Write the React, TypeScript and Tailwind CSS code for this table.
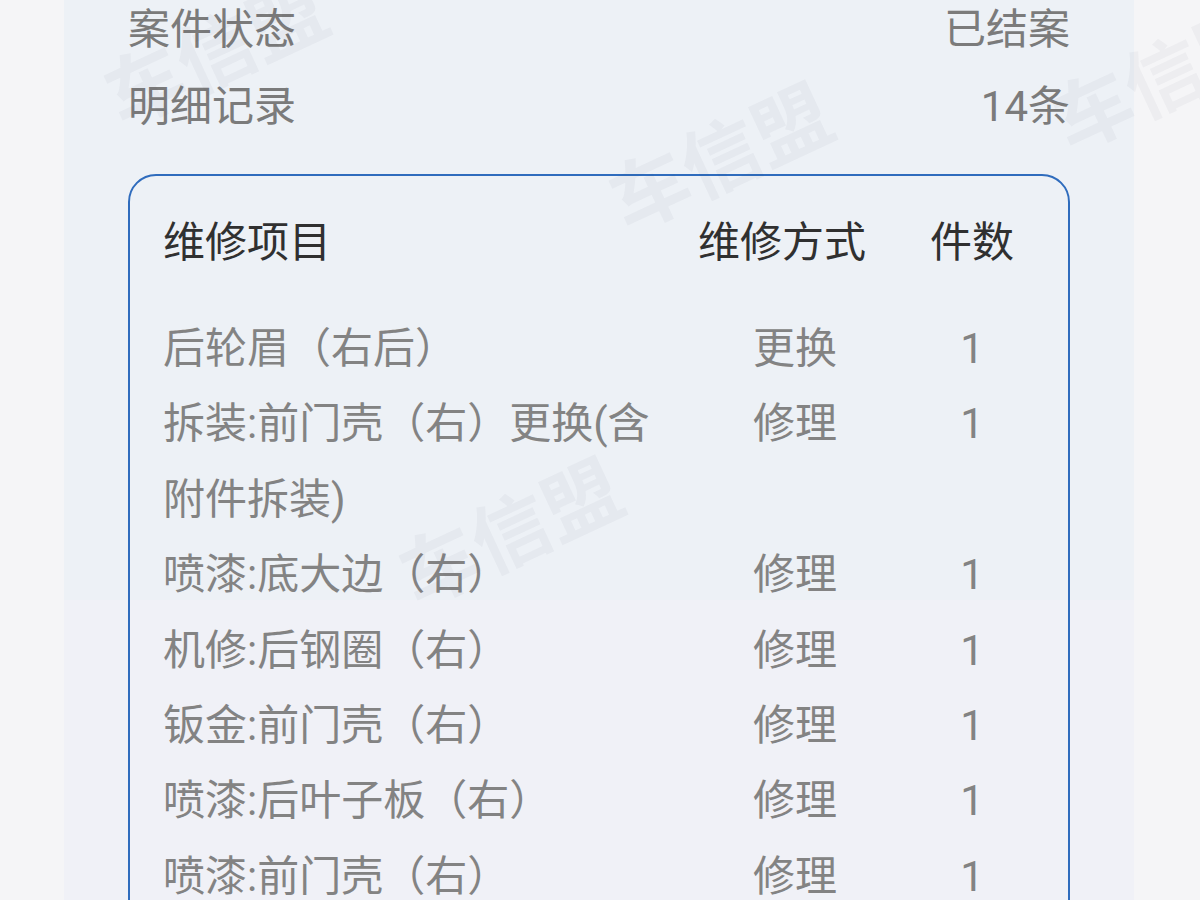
import React from "react";

const font = { fontFamily: 'Roboto, "Noto Sans CJK SC", "Noto Sans", sans-serif' };

const rows: { name: string; method: string; count: string }[] = [
  { name: "后轮眉（右后）", method: "更换", count: "1" },
  { name: "拆装:前门壳（右）更换(含附件拆装)", method: "修理", count: "1" },
  { name: "喷漆:底大边（右）", method: "修理", count: "1" },
  { name: "机修:后钢圈（右）", method: "修理", count: "1" },
  { name: "钣金:前门壳（右）", method: "修理", count: "1" },
  { name: "喷漆:后叶子板（右）", method: "修理", count: "1" },
  { name: "喷漆:前门壳（右）", method: "修理", count: "1" },
  { name: "喷漆:前门壳（右）", method: "修理", count: "1" },
];

function Watermark({ cls }: { cls: string }) {
  return (
    <div
      className={
        "pointer-events-none absolute -translate-x-1/2 -translate-y-1/2 rotate-[-25deg] whitespace-nowrap text-[78px] font-bold leading-none text-[rgba(60,70,90,0.045)] " +
        cls
      }
    >
      车信盟
    </div>
  );
}

export default function App() {
  return (
    <div
      className="relative h-[900px] w-[1200px] overflow-hidden bg-[#f5f5f7]"
      style={font}
    >
      <div className="ml-[64px] h-[900px] w-[1070px] bg-[linear-gradient(to_bottom,#edf1f6_600px,#f0f1f7_600px)] px-[64px] pt-[3px]">
        <div className="flex h-[54px] items-center justify-between text-[42px] leading-[54px] text-[#7b7b7b]">
          <span>案件状态</span>
          <span>已结案</span>
        </div>
        <div className="flex h-[100px] items-center justify-between text-[42px] leading-[100px] text-[#7b7b7b]">
          <span>明细记录</span>
          <span>14条</span>
        </div>
        <div className="mt-[17px] h-[900px] rounded-[28px] border-2 border-[#2f6cbd] pl-[33px]">
          <div className="flex pt-[29px] text-[42px] leading-[76px] text-[#303030]">
            <div className="w-[520px]">维修项目</div>
            <div className="w-[200px] pl-[15px]">维修方式</div>
            <div className="w-[178px] text-center">件数</div>
          </div>
          <div className="mt-[30px] flex flex-col text-[42px] leading-[75.4px] text-[#838383]">
            {rows.map((r, i) => (
              <div key={i} className="flex items-start">
                <div className="w-[520px]">{r.name}</div>
                <div className="w-[200px] pl-[70px]">{r.method}</div>
                <div className="w-[178px] text-center">{r.count}</div>
              </div>
            ))}
          </div>
        </div>
      </div>
      <Watermark cls="left-[217px] top-[55px]" />
      <Watermark cls="left-[722px] top-[160px]" />
      <Watermark cls="left-[1165px] top-[80px]" />
      <Watermark cls="left-[512px] top-[535px]" />
    </div>
  );
}
